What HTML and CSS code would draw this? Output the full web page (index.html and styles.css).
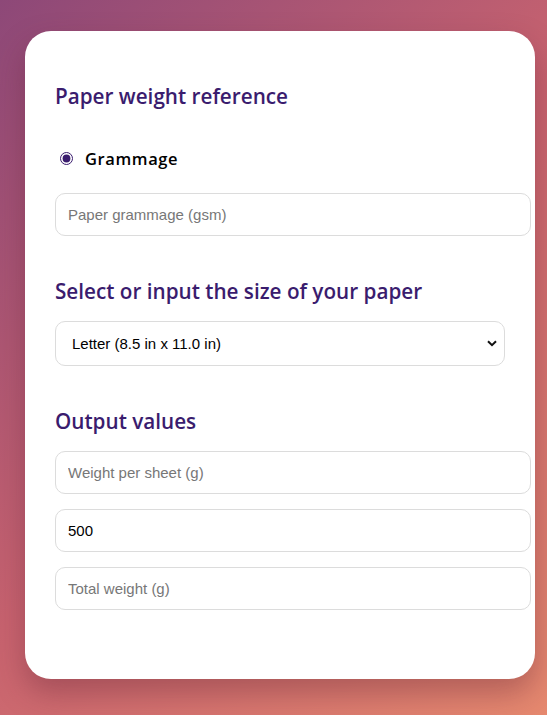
FILE: index.html
```html
<!DOCTYPE html>
<html lang="en">
<head>
<meta charset="utf-8">
<title>Paper weight calculator</title>
<link rel="stylesheet" href="styles.css">
</head>
<body>
<main class="card">
  <h2 class="title first">Paper weight reference</h2>
  <label class="radio-row">
    <input type="radio" name="ref" checked>
    <span class="radio-label">Grammage</span>
  </label>
  <input class="field" type="text" placeholder="Paper grammage (gsm)">

  <h2 class="title">Select or input the size of your paper</h2>
  <div class="select-wrap">
    <select class="select">
      <option>Letter (8.5 in x 11.0 in)</option>
    </select>
    <svg class="chevron" width="10" height="7" viewBox="0 0 10 7" aria-hidden="true">
      <path d="M1 1.2 L5 5.2 L9 1.2" fill="none" stroke="#111" stroke-width="2"/>
    </svg>
  </div>

  <h2 class="title">Output values</h2>
  <div class="outputs">
    <input class="field" type="text" placeholder="Weight per sheet (g)">
    <input class="field" type="text" value="500">
    <input class="field" type="text" placeholder="Total weight (g)">
  </div>
</main>
</body>
</html>
```
FILE: styles.css
```css
html, body {
  margin: 0;
  height: 100%;
}
body {
  background: linear-gradient(135deg, #8d4878 0%, #c8636f 50%, #e6896f 100%);
  font-family: "Liberation Sans", Arial, sans-serif;
  padding: 31px 12px 0 25px;
  box-sizing: border-box;
  overflow: hidden;
}
.card {
  width: 510px;
  height: 648px;
  box-sizing: border-box;
  background: #fff;
  border-radius: 26px;
  padding: 30px;
  display: flex;
  flex-direction: column;
  align-items: flex-start;
  box-shadow: 0 14px 30px rgba(90, 30, 50, 0.35);
}
.title {
  font-family: "Open Sans", sans-serif;
  font-weight: 600;
  font-size: 20.7px;
  line-height: 30px;
  color: #3a1c6e;
  margin: 40px 0 15px;
}
.title.first {
  margin: 20px 0 35px;
}
.radio-row {
  display: flex;
  align-items: center;
  height: 24px;
  margin-bottom: 23px;
}
.radio-row input {
  margin: 0 12px 0 5px;
  width: 13px;
  height: 13px;
  accent-color: #3a1c6e;
}
.radio-label {
  font-family: "Open Sans", sans-serif;
  font-weight: 600;
  font-size: 16.5px;
  letter-spacing: 0.6px;
  color: #000;
}
.field {
  display: block;
  width: 450px;
  padding: 12px;
  border: 1px solid #dcdcdc;
  border-radius: 10px;
  font-family: "Liberation Sans", Arial, sans-serif;
  font-size: 15px;
  line-height: 17px;
  height: 17px;
  color: #000;
  outline: none;
  margin: 0;
}
.field::placeholder {
  color: #777;
}
.select-wrap {
  position: relative;
  width: 450px;
  height: 45px;
}
.select {
  appearance: none;
  -webkit-appearance: none;
  width: 450px;
  height: 45px;
  padding: 0 30px 0 16px;
  border: 1px solid #dcdcdc;
  border-radius: 10px;
  background: #fff;
  font-family: "Liberation Sans", Arial, sans-serif;
  font-size: 15px;
  color: #000;
  margin: 0;
}
.chevron {
  position: absolute;
  right: 8px;
  top: 19px;
  pointer-events: none;
}
.outputs {
  display: flex;
  flex-direction: column;
  gap: 15px;
}
```
